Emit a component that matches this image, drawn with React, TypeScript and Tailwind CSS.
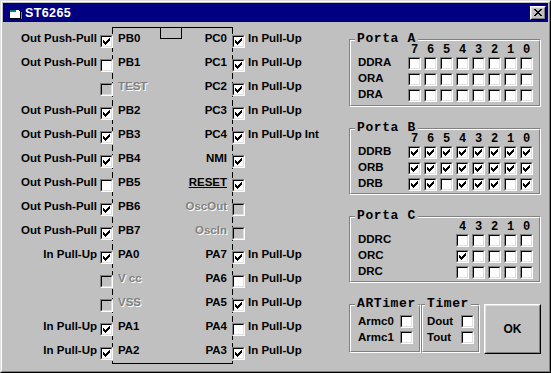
import React from 'react';

type Pin = { name: string; on?: boolean; off?: boolean; text?: string; ul?: boolean };

// left side of the chip, top to bottom
const leftPins: Pin[] = [
  { name: 'PB0', on: true, text: 'Out Push-Pull' },
  { name: 'PB1', text: 'Out Push-Pull' },
  { name: 'TEST', off: true },
  { name: 'PB2', on: true, text: 'Out Push-Pull' },
  { name: 'PB3', on: true, text: 'Out Push-Pull' },
  { name: 'PB4', on: true, text: 'Out Push-Pull' },
  { name: 'PB5', text: 'Out Push-Pull' },
  { name: 'PB6', on: true, text: 'Out Push-Pull' },
  { name: 'PB7', on: true, text: 'Out Push-Pull' },
  { name: 'PA0', on: true, text: 'In Pull-Up' },
  { name: 'V cc', off: true },
  { name: 'VSS', off: true },
  { name: 'PA1', on: true, text: 'In Pull-Up' },
  { name: 'PA2', on: true, text: 'In Pull-Up' },
];

const rightPins: Pin[] = [
  { name: 'PC0', on: true, text: 'In Pull-Up' },
  { name: 'PC1', on: true, text: 'In Pull-Up' },
  { name: 'PC2', on: true, text: 'In Pull-Up' },
  { name: 'PC3', on: true, text: 'In Pull-Up' },
  { name: 'PC4', on: true, text: 'In Pull-Up Int' },
  { name: 'NMI', on: true },
  { name: 'RESET', on: true, ul: true },
  { name: 'OscOut', off: true },
  { name: 'OscIn', off: true },
  { name: 'PA7', on: true, text: 'In Pull-Up' },
  { name: 'PA6', text: 'In Pull-Up' },
  { name: 'PA5', on: true, text: 'In Pull-Up' },
  { name: 'PA4', text: 'In Pull-Up' },
  { name: 'PA3', on: true, text: 'In Pull-Up' },
];

const ports = [
  {
    title: 'Porta A',
    rows: [
      { label: 'DDRA', vals: [0, 0, 0, 0, 0, 0, 0, 0] },
      { label: 'ORA', vals: [0, 0, 0, 0, 0, 0, 0, 0] },
      { label: 'DRA', vals: [0, 0, 0, 0, 0, 0, 0, 0] },
    ],
  },
  {
    title: 'Porta B',
    rows: [
      { label: 'DDRB', vals: [1, 1, 1, 1, 1, 1, 1, 1] },
      { label: 'ORB', vals: [1, 1, 1, 1, 1, 1, 1, 1] },
      { label: 'DRB', vals: [1, 1, 0, 1, 1, 1, 0, 1] },
    ],
  },
];

// pixel patterns, turned into svg runs
const pixelPath = (rows: string[]) =>
  rows
    .map((r, y) => {
      let d = '';
      let x = 0;
      while (x < r.length) {
        if (r[x] === '#') {
          let n = 0;
          while (r[x + n] === '#') n++;
          d += `M${x} ${y}h${n}v1h-${n}z`;
          x += n;
        } else x++;
      }
      return d;
    })
    .join('');

const CHECK = pixelPath(['......#', '.....##', '#...###', '##.###.', '#####..', '.###...', '..#....']);
const CROSS = pixelPath(['##....##', '.##..##.', '..####..', '...##...', '..####..', '.##..##.', '##....##']);

const SANS = "font-['Liberation_Sans',Arial,sans-serif] font-bold text-[11.5px] leading-[13px]";
const MONO = "font-['Liberation_Mono','Courier_New',monospace] font-bold";
const GRAYED = 'text-[#808080] [text-shadow:1px_1px_0_#fff]';

function Box({ checked, disabled }: { checked?: boolean; disabled?: boolean }) {
  return (
    <div className="relative z-10 w-[13px] h-[13px] shrink-0 border border-t-[#808080] border-l-[#808080] border-b-white border-r-white">
      <div
        className={`w-full h-full border border-t-black border-l-black border-b-[#dfdfdf] border-r-[#dfdfdf] ${
          disabled ? 'bg-[#c0c0c0]' : 'bg-white'
        }`}
      >
        {checked && (
          <svg className="block" width="9" height="9" viewBox="0 0 9 9" shapeRendering="crispEdges">
            <path d={CHECK} transform="translate(1 1)" fill="#000" />
          </svg>
        )}
      </div>
    </div>
  );
}

function Group({
  title,
  className,
  titleLeft = 'left-[5px]',
  children,
}: {
  title: string;
  className: string;
  titleLeft?: string;
  children: React.ReactNode;
}) {
  return (
    <div className={`relative border border-t-[#808080] border-l-[#808080] border-b-white border-r-white ${className}`}>
      <div className="h-full border border-t-white border-l-white border-b-[#808080] border-r-[#808080]">{children}</div>
      <span
        className={`absolute ${titleLeft} -top-[6px] px-[2px] bg-[#c0c0c0] text-[13px] tracking-[0.6px] leading-[10px] ${MONO}`}
      >
        {title}
      </span>
    </div>
  );
}

function Digit({ n }: { n: number }) {
  return <div className={`w-[13px] h-[16px] pt-[3px] text-center text-[12px] leading-[12px] ${MONO}`}>{n}</div>;
}

export default function App() {
  return (
    <div className="w-[551px] h-[373px] bg-[#c0c0c0] border border-t-[#dfdfdf] border-l-[#dfdfdf] border-b-black border-r-black text-black">
      <div className="h-full border border-t-white border-l-white border-b-[#808080] border-r-[#808080] p-px flex flex-col">
        {/* Title bar */}
        <div className="h-[19px] bg-[#000080] flex items-center pl-[5px] pr-[2px] shrink-0">
          <svg width="14" height="12" viewBox="0 0 14 12" shapeRendering="crispEdges">
            <path d="M1 2h9l2 2v7H1z" fill="#fff" stroke="#000" strokeWidth="1" transform="translate(0.5 0.5)" />
            <rect x="2" y="3" width="6" height="2" fill="#008080" />
            <rect x="13" y="5" width="1" height="7" fill="#808080" />
          </svg>
          <span className="ml-[3px] text-white font-['Liberation_Sans',Arial,sans-serif] font-bold text-[12.5px] leading-[14px] tracking-[0.4px]">
            ST6265
          </span>
          <div className="ml-auto w-[16px] h-[14px] bg-[#c0c0c0] border border-t-white border-l-white border-b-black border-r-black">
            <div className="w-full h-full border border-t-[#dfdfdf] border-l-[#dfdfdf] border-b-[#808080] border-r-[#808080] flex items-center justify-center">
              <svg width="8" height="7" viewBox="0 0 8 7" shapeRendering="crispEdges">
                <path d={CROSS} fill="#000" />
              </svg>
            </div>
          </div>
        </div>

        {/* Body */}
        <div className={`flex ${SANS}`}>
          {/* pin mode texts, left */}
          <div className="w-[94px] pt-[6px] flex flex-col">
            {leftPins.map((p) => (
              <div key={p.name} className="h-[24px] shrink-0 pt-[4px] text-right whitespace-nowrap">
                {p.text}
              </div>
            ))}
          </div>
          <div className="ml-[3px] pt-[6px] flex flex-col">
            {leftPins.map((p) => (
              <div key={p.name} className="h-[24px] shrink-0 pt-[7px]">
                <Box checked={p.on} disabled={p.off} />
              </div>
            ))}
          </div>

          {/* Chip outline */}
          <div className="relative -ml-px mt-[5px] w-[121px] h-[337px] border-y border-black [background:repeating-linear-gradient(#000_0_6px,transparent_6px_9px)_left/1px_100%_no-repeat,repeating-linear-gradient(#000_0_6px,transparent_6px_9px)_right/1px_100%_no-repeat]">
            <div className="absolute left-[48px] -top-px w-[22px] h-[12px] border border-t-0 border-black" />
            <div className="flex flex-col">
              {leftPins.map((p, i) => {
                const r = rightPins[i];
                return (
                  <div key={p.name} className="h-[24px] shrink-0 pt-[4px] px-[6px] flex justify-between whitespace-nowrap">
                    <span className={p.off ? GRAYED : ''}>{p.name}</span>
                    <span className={`${r.off ? GRAYED : ''} ${r.ul ? 'underline underline-offset-[1px]' : ''}`}>{r.name}</span>
                  </div>
                );
              })}
            </div>
          </div>

          <div className="-ml-px pt-[6px] flex flex-col">
            {rightPins.map((p) => (
              <div key={p.name} className="h-[24px] shrink-0 pt-[7px]">
                <Box checked={p.on} disabled={p.off} />
              </div>
            ))}
          </div>
          <div className="w-[104px] pl-[3px] pt-[6px] flex flex-col">
            {rightPins.map((p) => (
              <div key={p.name} className="h-[24px] shrink-0 pt-[4px] whitespace-nowrap">
                {p.text}
              </div>
            ))}
          </div>

          {/* Registers */}
          <div className="w-[192px] flex flex-col">
            {ports.map((port, idx) => (
              <Group key={port.title} title={port.title} className={idx === 0 ? 'mt-[17px] h-[68px]' : 'mt-[21px] h-[67px]'}>
                <div className="grid grid-cols-[50px_repeat(8,16px)] pl-[7px]">
                  <div />
                  {[7, 6, 5, 4, 3, 2, 1, 0].map((n) => (
                    <Digit key={n} n={n} />
                  ))}
                  {port.rows.map((row) => (
                    <React.Fragment key={row.label}>
                      <div className="h-[16px] -mt-px">{row.label}</div>
                      {row.vals.map((v, j) => (
                        <div key={j} className="h-[16px]">
                          <Box checked={v === 1} />
                        </div>
                      ))}
                    </React.Fragment>
                  ))}
                </div>
              </Group>
            ))}

            <Group title="Porta C" className="mt-[21px] h-[67px]">
              <div className="grid grid-cols-[98px_repeat(5,16px)] pl-[7px]">
                <div />
                {[4, 3, 2, 1, 0].map((n) => (
                  <Digit key={n} n={n} />
                ))}
                {['DDRC', 'ORC', 'DRC'].map((label) => (
                  <React.Fragment key={label}>
                    <div className="h-[16px] -mt-px">{label}</div>
                    {[4, 3, 2, 1, 0].map((b) => (
                      <div key={b} className="h-[16px]">
                        <Box checked={label === 'ORC' && b === 4} />
                      </div>
                    ))}
                  </React.Fragment>
                ))}
              </div>
            </Group>

            <div className="mt-[21px] flex items-start">
              <Group title="ARTimer" className="w-[72px] h-[49px]">
                <div className="pt-[9px] pl-[7px] flex flex-col">
                  {['Armc0', 'Armc1'].map((l) => (
                    <div key={l} className="h-[16px] flex">
                      <div className="w-[42px]">{l}</div>
                      <Box />
                    </div>
                  ))}
                </div>
              </Group>
              <Group title="Timer" titleLeft="left-[3px]" className="w-[59px] h-[49px]">
                <div className="pt-[9px] pl-[4px] flex flex-col">
                  {['Dout', 'Tout'].map((l) => (
                    <div key={l} className="h-[16px] flex">
                      <div className="w-[34px]">{l}</div>
                      <Box />
                    </div>
                  ))}
                </div>
              </Group>
              <div className="ml-[4px] w-[57px] h-[50px] border border-t-white border-l-white border-b-black border-r-black">
                <div className="w-full h-full border border-t-[#dfdfdf] border-l-[#dfdfdf] border-b-[#808080] border-r-[#808080] flex items-center justify-center text-[12px]">
                  OK
                </div>
              </div>
            </div>
          </div>
        </div>
      </div>
    </div>
  );
}
